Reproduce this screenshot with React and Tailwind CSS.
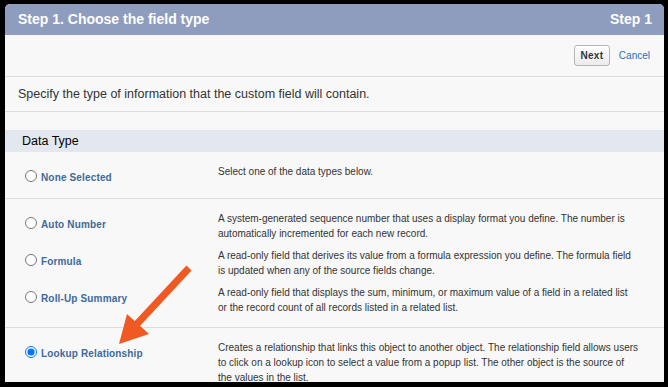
import React from "react";

const rows = [
  {
    label: "None Selected",
    desc: "Select one of the data types below.",
    cls: "pt-[12px] pb-[13px] border-b border-[#dcdcdc]",
  },
  {
    label: "Auto Number",
    desc: "A system-generated sequence number that uses a display format you define. The number is automatically incremented for each new record.",
    cls: "pt-[12px]",
  },
  {
    label: "Formula",
    desc: "A read-only field that derives its value from a formula expression you define. The formula field is updated when any of the source fields change.",
    cls: "pt-[7px]",
  },
  {
    label: "Roll-Up Summary",
    desc: "A read-only field that displays the sum, minimum, or maximum value of a field in a related list or the record count of all records listed in a related list.",
    cls: "pt-[7px] pb-[12px] border-b border-[#dcdcdc]",
  },
  {
    label: "Lookup Relationship",
    desc: "Creates a relationship that links this object to another object. The relationship field allows users to click on a lookup icon to select a value from a popup list. The other object is the source of the values in the list.",
    cls: "pt-[12px]",
    checked: true,
  },
];

const TypeRow = ({ label, desc, cls, checked }) => (
  <div className={`flex items-start ${cls}`}>
    <div className="w-[213px] shrink-0 pl-[20px] mt-[6px] flex items-center h-[15px]">
      <input
        type="radio"
        name="fieldType"
        checked={!!checked}
        readOnly
        className="m-0 w-[12px] h-[12px] relative top-[-2px]"
      />
      <span className="ml-[4px] text-[10px] leading-[15px] font-bold text-[#3d6a9a] tracking-[0.15px]">
        {label}
      </span>
    </div>
    <p className="flex-1 pr-[25px] text-[10px] leading-[15px] text-[#333]">{desc}</p>
  </div>
);

export default function App() {
  return (
    <div
      className="w-[668px] h-[387px] bg-black pt-[4px] pl-[5px] pr-[4px] overflow-hidden"
      style={{ fontFamily: '"Liberation Sans", Arial, sans-serif' }}
    >
      <div className="relative h-[378px] bg-[#f8f8f8] rounded-t-[5px] overflow-hidden">
        <div className="h-[31px] bg-[#8e9dbe] rounded-t-[5px] pl-[13px] pr-[12px] flex items-center justify-between text-white font-bold text-[14px]">
          <span>Step 1. Choose the field type</span>
          <span>Step 1</span>
        </div>

        <div className="h-[42px] flex items-center justify-end gap-[9px] pr-[14px] border-b border-[#dcdcdc]">
          <button className="h-[21px] w-[36px] rounded-[3px] border border-[#b5b5b5] bg-gradient-to-b from-white to-[#ececec] text-[10px] font-bold text-[#333] tracking-[0.3px]">
            Next
          </button>
          <span className="text-[10px] text-[#1f6dc2]">Cancel</span>
        </div>

        <div className="h-[35px] flex items-center pl-[13px] border-b border-[#dcdcdc] text-[12.5px] text-[#333]">
          Specify the type of information that the custom field will contain.
        </div>

        <div className="h-[18px]" />

        <div className="h-[22px] bg-[#e3e7ef] flex items-center pl-[17px] text-[12.5px] text-black">
          Data Type
        </div>

        {rows.map((r) => (
          <TypeRow key={r.label} {...r} />
        ))}

        <svg
          className="absolute left-0 top-0 pointer-events-none"
          width="664"
          height="383"
          viewBox="5 4 664 383"
        >
          <line x1="189" y1="268" x2="136" y2="325" stroke="#f05a22" strokeWidth="7" />
          <polygon points="119,344 127,314 149,334" fill="#f05a22" />
        </svg>
      </div>
    </div>
  );
}
